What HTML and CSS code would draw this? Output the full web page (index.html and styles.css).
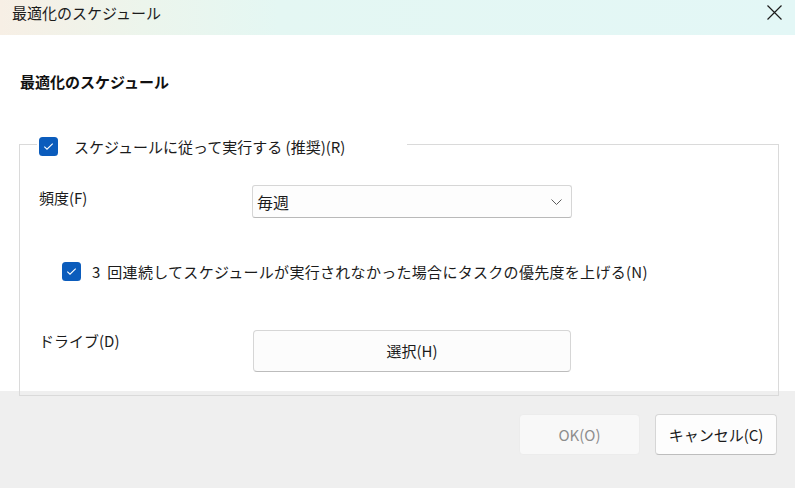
FILE: index.html
```html
<!DOCTYPE html>
<html lang="ja">
<head>
<meta charset="utf-8">
<title>最適化のスケジュール</title>
<link rel="stylesheet" href="styles.css">
</head>
<body>
<div class="window">
  <header class="titlebar">
    <span class="title">最適化のスケジュール</span>
    <svg class="close" width="15" height="15" viewBox="0 0 15 15"><path d="M0.5 0.5 L14.5 14.5 M14.5 0.5 L0.5 14.5" stroke="#1c1c1c" stroke-width="1.2" fill="none"/></svg>
  </header>
  <main class="main">
    <h1 class="heading">最適化のスケジュール</h1>
    <fieldset class="group">
      <legend class="legend">
        <span class="legend-row">
          <svg class="check" width="19" height="19" viewBox="0 0 19 19"><rect x="0" y="0" width="19" height="19" rx="3.5" fill="#0b5cbc"/><path d="M5.3 9.6 L8 12.2 L13.7 6.6" stroke="#fff" stroke-width="1.1" fill="none"/></svg>
          <span class="legend-text">スケジュールに従って実行する (推奨)(R)</span>
        </span>
      </legend>
      <div class="row row-freq">
        <span class="label label-freq">頻度(F)</span>
        <div class="select">
          <span class="select-value">毎週</span>
          <svg class="chevron" width="11" height="6" viewBox="0 0 11 6"><path d="M0.5 0.5 L5.5 5.5 L10.5 0.5" stroke="#5c5c5c" stroke-width="1" fill="none"/></svg>
        </div>
      </div>
      <div class="row row-check">
        <svg class="check" width="19" height="19" viewBox="0 0 19 19"><rect x="0" y="0" width="19" height="19" rx="3.5" fill="#0b5cbc"/><path d="M5.3 9.6 L8 12.2 L13.7 6.6" stroke="#fff" stroke-width="1.1" fill="none"/></svg>
        <span class="check-text"><span class="num">3</span> 回連続してスケジュールが実行されなかった場合にタスクの優先度を上げる(N)</span>
      </div>
      <div class="row row-drive">
        <span class="label label-drive">ドライブ(D)</span>
        <button class="btn btn-choose" type="button">選択(H)</button>
      </div>
    </fieldset>
  </main>
  <footer class="footer">
    <button class="btn btn-ok" type="button" disabled>OK(O)</button>
    <button class="btn btn-cancel" type="button">キャンセル(C)</button>
  </footer>
</div>
</body>
</html>
```
FILE: styles.css
```css
* { box-sizing: border-box; }
html, body {
  margin: 0;
  padding: 0;
}
body {
  width: 795px;
  height: 488px;
  overflow: hidden;
  background: #efefef;
  font-family: "Noto Sans CJK JP", "Noto Sans", sans-serif;
  font-size: 15px;
  color: #1b1b1b;
}
.window {
  width: 795px;
  height: 488px;
  display: flex;
  flex-direction: column;
}
.titlebar {
  height: 35px;
  flex: none;
  display: flex;
  justify-content: space-between;
  align-items: flex-start;
  padding: 3px 13px 0 12px;
  background: linear-gradient(90deg, #f7efe5 0%, #ecf5ec 18%, #e4f7f3 35%, #e3f7f6 100%);
}
.title {
  font-size: 15px;
  line-height: 20px;
  color: #1c1c1c;
}
.close {
  margin-top: 2px;
  display: block;
}
.main {
  height: 356px;
  flex: none;
  background: #ffffff;
  padding: 37px 0 0 19px;
}
.heading {
  margin: 0;
  font-size: 15px;
  line-height: 20px;
  font-weight: 700;
  color: #111;
  padding-left: 1px;
}
.group {
  margin: 45px 0 0 0;
  width: 760px;
  min-width: 0;
  border: 1px solid #dadada;
  padding: 0 19px 23px 19px;
}
.legend {
  height: 14px;
  width: 370px;
  margin-left: -2px;
  padding: 0 2px;
}
.legend-row {
  display: flex;
  align-items: center;
  height: 19px;
}
.check {
  display: block;
  flex: none;
}
.legend-text {
  margin-left: 16px;
  line-height: 19px;
  white-space: nowrap;
}
.row {
  display: flex;
  align-items: flex-start;
}
.row-freq {
  margin-top: 34px;
}
.label {
  line-height: 20px;
  white-space: nowrap;
}
.label-freq {
  width: 213px;
  padding-top: 3px;
}
.select {
  width: 320px;
  height: 33px;
  display: flex;
  align-items: center;
  justify-content: space-between;
  padding: 0 9px 0 4px;
  background: #fdfdfd;
  border: 1px solid #d6d6d6;
  border-bottom-color: #b9b9b9;
  border-radius: 3px;
}
.select-value {
  font-size: 16px;
  line-height: 20px;
  padding-top: 1px;
}
.chevron {
  display: block;
}
.row-check {
  margin-top: 44px;
  padding-left: 23px;
  align-items: center;
  height: 19px;
}
.check-text {
  margin-left: 11px;
  line-height: 19px;
  white-space: nowrap;
  letter-spacing: 0.3px;
}
.num {
  margin-right: 3px;
}
.row-drive {
  margin-top: 49px;
}
.label-drive {
  width: 214px;
  padding-top: 1px;
}
.btn {
  font-family: "Noto Sans CJK JP", "Noto Sans", sans-serif;
  font-size: 15px;
  line-height: 20px;
  color: #1b1b1b;
  border-radius: 4px;
  padding: 0;
  margin: 0;
}
.btn-choose {
  width: 318px;
  height: 42px;
  background: #fcfcfc;
  border: 1px solid #d6d6d6;
  border-bottom-color: #bcbcbc;
}
.footer {
  flex: 1;
  display: flex;
  justify-content: flex-end;
  align-items: flex-start;
  gap: 15px;
  padding: 23px 18px 0 0;
}
.btn-ok {
  width: 121px;
  height: 41px;
  background: #f8f8f8;
  border: 1px solid #ececec;
  color: #8d8d8d;
}
.btn-cancel {
  width: 122px;
  height: 41px;
  background: #fdfdfd;
  border: 1px solid #d6d6d6;
  border-bottom-color: #bdbdbd;
}
```
